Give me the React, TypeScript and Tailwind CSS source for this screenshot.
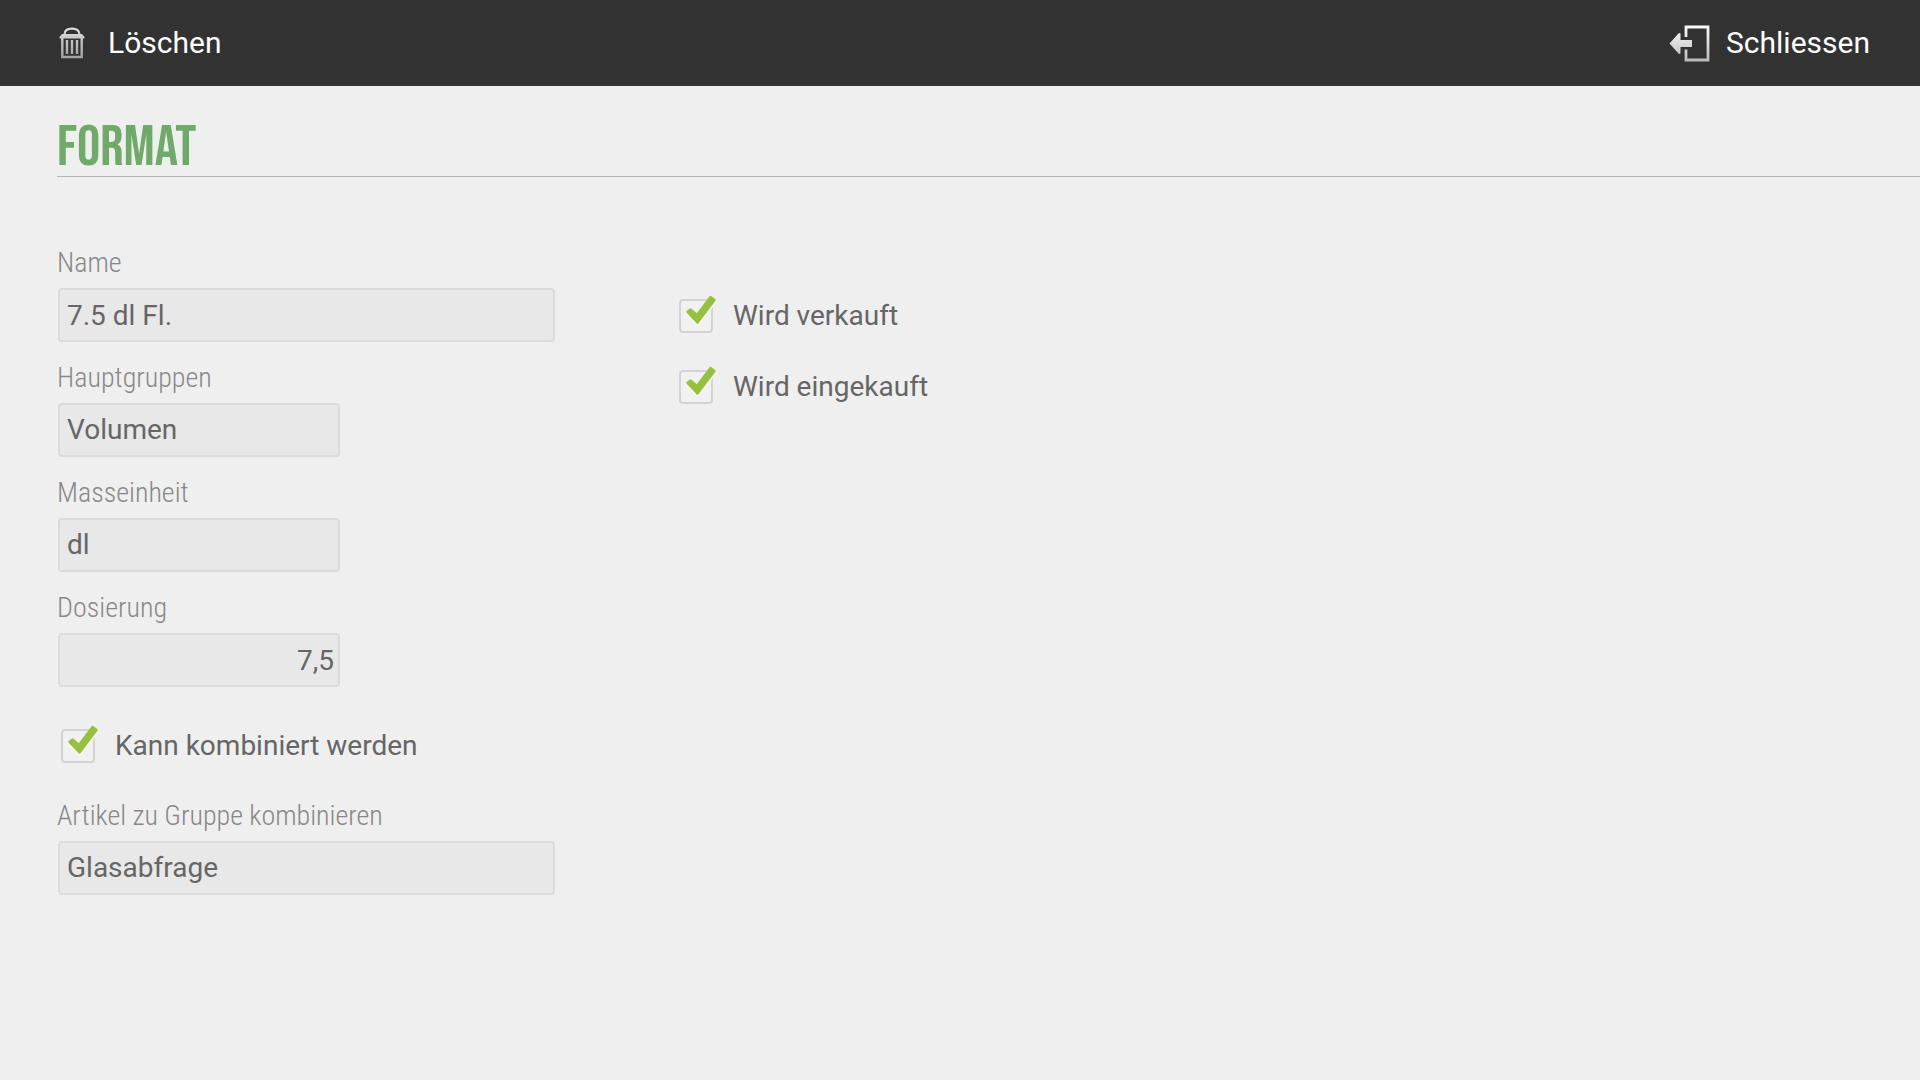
import { useId, type ReactNode } from "react";

const labelClass =
  "h-9 leading-[38px] text-[28px] font-light text-[#888888] whitespace-nowrap font-['Roboto_Condensed','Liberation_Sans_Narrow','Open_Sans_Condensed',sans-serif]";
const boxClass =
  "ml-px h-[54px] rounded-[4px] border-2 border-[#dbdbdb] bg-[#e8e8e8] text-[28px] text-[#666666] outline-none appearance-none";

function TrashIcon() {
  return (
    <svg width="26" height="32" viewBox="0 0 26 32" fill="none" aria-hidden="true">
      <defs>
        <linearGradient id="trash" x1="0" y1="0" x2="0" y2="32" gradientUnits="userSpaceOnUse">
          <stop stopColor="#e0e0e0" />
          <stop offset="1" stopColor="#a0a0a0" />
        </linearGradient>
      </defs>
      <path
        d="M5.500 7.500C5.500 3.500 8 1.600 13 1.600s7.500 1.900 7.500 5.900"
        stroke="url(#trash)"
        strokeWidth="2.200"
      />
      <path d="M3 7h20l2.500 3v1.400h-25V10z" fill="url(#trash)" />
      <path d="M3.300 10v20h19.400V10" stroke="url(#trash)" strokeWidth="2.400" />
      <path d="M8 13v14M13 13v14M18 13v14" stroke="url(#trash)" strokeWidth="2.400" />
    </svg>
  );
}

function ExitIcon() {
  return (
    <svg width="42" height="38" viewBox="0 0 42 38" fill="none" aria-hidden="true">
      <defs>
        <linearGradient id="exit" x1="0" y1="0" x2="0" y2="38" gradientUnits="userSpaceOnUse">
          <stop stopColor="#ffffff" />
          <stop offset="1" stopColor="#b8b8b8" />
        </linearGradient>
      </defs>
      <path d="M18 13V3h22v33H18V25.500" stroke="url(#exit)" strokeWidth="2.800" />
      <path d="M1.500 19.500L10 10Q11.500 8.500 12.500 9.500V16H24v7H12.500V29.500Q11.500 30.500 10 29z" fill="url(#exit)" />
    </svg>
  );
}

function Field({ label, children }: { label: string; children: (id: string) => ReactNode }) {
  const id = useId();
  return (
    <div className="flex flex-col items-start gap-2">
      <label htmlFor={id} className={labelClass}>
        {label}
      </label>
      {children(id)}
    </div>
  );
}

function Picker({ label, value, wide }: { label: string; value: string; wide?: boolean }) {
  return (
    <Field label={label}>
      {(id) => (
        <select
          id={id}
          defaultValue={value}
          className={`${boxClass} px-[7px] ${wide ? "w-[497px]" : "w-[282px]"}`}
        >
          <option>{value}</option>
        </select>
      )}
    </Field>
  );
}

function Check({ label }: { label: string }) {
  return (
    <label className="flex items-center gap-5 h-[34px] text-[28px] text-[#666666] whitespace-nowrap">
      <span className="relative size-[34px] shrink-0">
        <input
          type="checkbox"
          defaultChecked
          className="peer block size-full appearance-none rounded-[4px] border-2 border-[#d3d3d3] bg-[#f1f1f1]"
        />
        <svg
          className="absolute -top-1.5 left-0 hidden peer-checked:block pointer-events-none"
          width="40"
          height="40"
          viewBox="0 0 40 40"
          fill="none"
          strokeLinejoin="round"
          aria-hidden="true"
        >
          <path
            d="M8 20L11.500 17l6.500 5.500L31.500 5l4.500 3L18.500 31z"
            fill="#f6f6f6"
            stroke="#f6f6f6"
            strokeWidth="4"
          />
          <path
            d="M8.500 19L11.500 16.500l6.500 5.500L31.500 4l4 3L18.500 29.500z"
            fill="#95c23d"
            stroke="#95c23d"
            strokeWidth="2.500"
          />
        </svg>
      </span>
      {label}
    </label>
  );
}

export default function App() {
  return (
    <div className="min-h-screen bg-[#efefef] font-['Roboto',sans-serif]">
      <header className="h-[86px] bg-[#323232] pl-[59px] pr-[50px] flex items-center justify-between text-[30px] leading-[42px] text-white">
        <button className="flex items-center gap-[23px]">
          <TrashIcon />
          Löschen
        </button>
        <button className="flex items-center gap-4">
          <ExitIcon />
          Schliessen
        </button>
      </header>

      <main className="pl-[57px]">
        <h1 className="h-[91px] pt-[30px] border-b border-[#b5b7b5] leading-[64px] text-[58px] font-normal text-[#70aa68] font-['Bebas_Neue','Liberation_Sans_Narrow',sans-serif]">
          FORMAT
        </h1>

        <form className="mt-[67px] flex items-start gap-[124px]">
          <div className="w-[498px] flex flex-col gap-[17px]">
            <Field label="Name">
              {(id) => (
                <input
                  id={id}
                  defaultValue="7.5 dl Fl."
                  className={`${boxClass} w-[497px] px-[7px]`}
                />
              )}
            </Field>
            <Picker label="Hauptgruppen" value="Volumen" />
            <Picker label="Masseinheit" value="dl" />
            <Field label="Dosierung">
              {(id) => (
                <input
                  id={id}
                  defaultValue="7,5"
                  className={`${boxClass} w-[282px] px-1 text-right`}
                />
              )}
            </Field>
            <div className="mt-[25px] mb-[17px] pl-1">
              <Check label="Kann kombiniert werden" />
            </div>
            <Picker label="Artikel zu Gruppe kombinieren" value="Glasabfrage" wide />
          </div>

          <div className="pt-[55px] flex flex-col gap-[37px]">
            <Check label="Wird verkauft" />
            <Check label="Wird eingekauft" />
          </div>
        </form>
      </main>
    </div>
  );
}
